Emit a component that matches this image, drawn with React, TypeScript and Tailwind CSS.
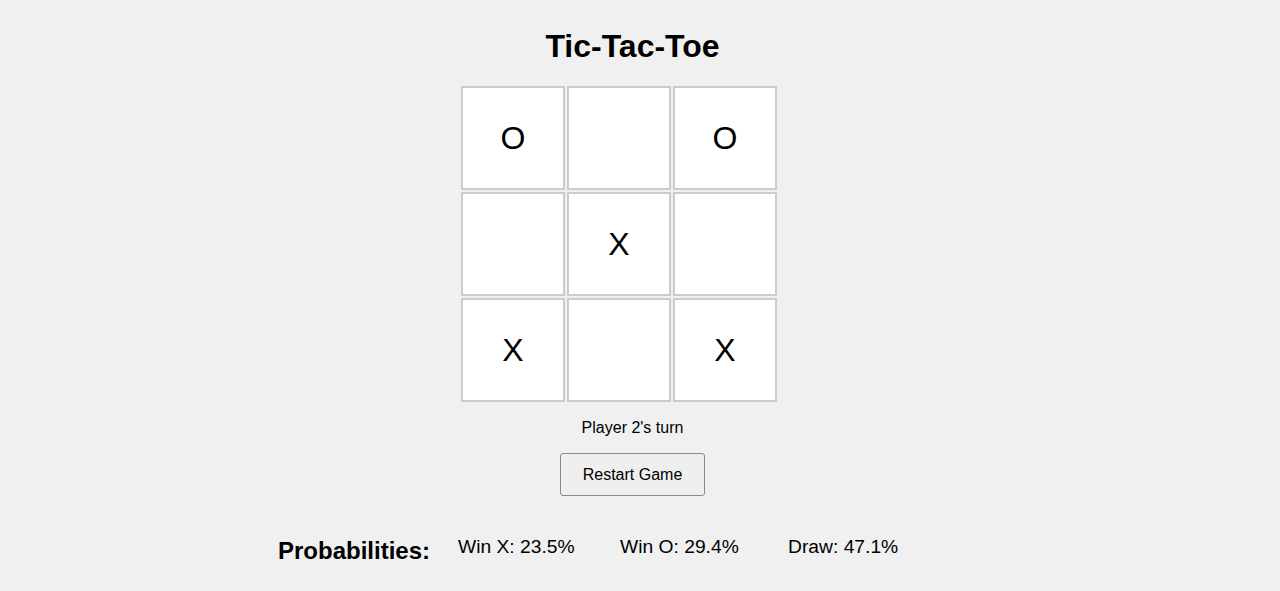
import React from "react";

const board = ["O", "", "O", "", "X", "", "X", "", "X"];

export default function App() {
  return (
    <div
      className="min-h-[591px] w-full bg-[#f0f0f0] text-black"
      style={{ fontFamily: '"Liberation Sans", Arial, sans-serif' }}
    >
      <div className="flex flex-col items-center pr-[15px]">
        <h1 className="mt-[28px] text-[32px] leading-[37px] font-bold">Tic-Tac-Toe</h1>
        <div className="mt-[21px] mr-[27px] grid grid-cols-[104px_104px_104px] gap-[2px]">
          {board.map((v, i) => (
            <div
              key={i}
              className="flex h-[104px] w-[104px] items-center justify-center border-2 border-[#cccccc] bg-white text-[32px] leading-[37px]"
            >
              {v}
            </div>
          ))}
        </div>
        <p className="mt-[17px] text-[16px] leading-[18px]">Player 2's turn</p>
        <button className="mt-[16px] h-[43px] w-[145px] rounded-[3px] border border-[#8a8a8a] bg-[#efefef] text-[16px] leading-[18px]">
          Restart Game
        </button>
      </div>
      <div className="mt-[39px] flex items-start pl-[278px]">
        <h2 className="mt-[2px] text-[24px] leading-[28px] font-bold">Probabilities:</h2>
        <span className="ml-[28px] mt-[1px] w-[162px] text-[19.25px] leading-[22px]">Win X: 23.5%</span>
        <span className="mt-[1px] w-[168px] text-[19.25px] leading-[22px]">Win O: 29.4%</span>
        <span className="mt-[1px] text-[19.25px] leading-[22px]">Draw: 47.1%</span>
      </div>
    </div>
  );
}
